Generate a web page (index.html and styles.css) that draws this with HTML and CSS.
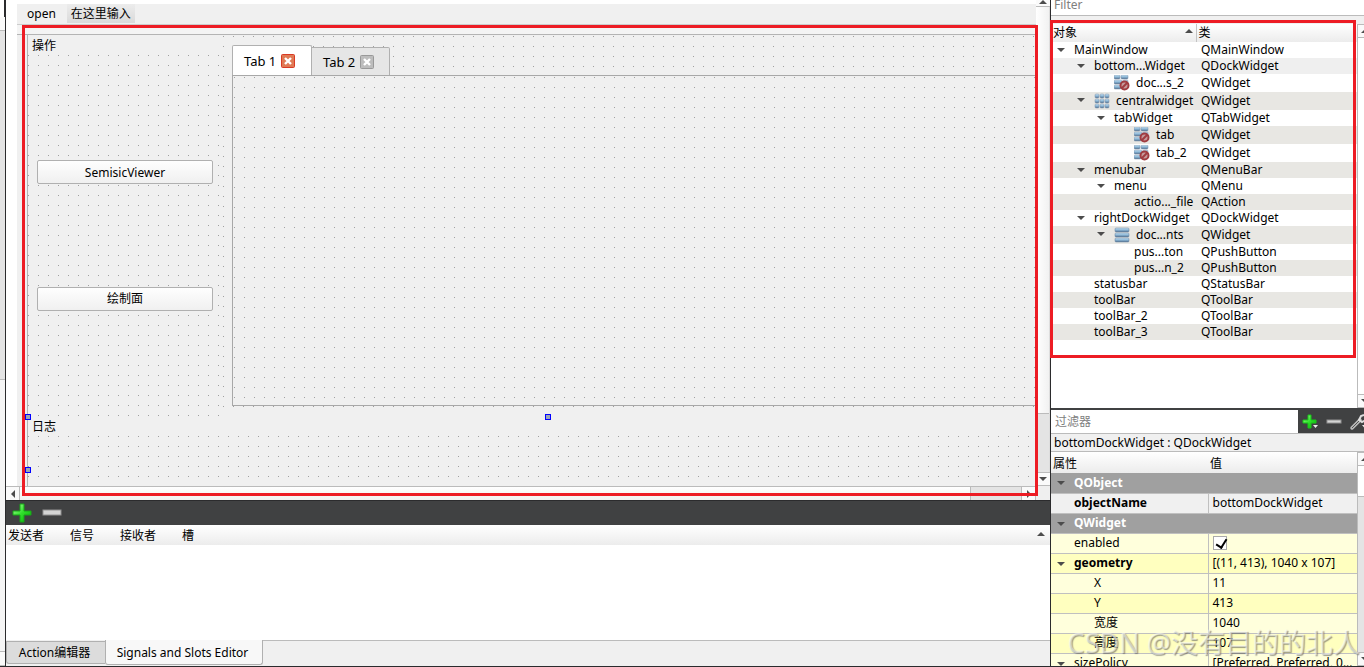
FILE: index.html
```html
<!DOCTYPE html>
<html lang="zh">
<head>
<meta charset="utf-8">
<title>Designer</title>
<link rel="stylesheet" href="styles.css">
</head>
<body>
<svg class="defs" aria-hidden="true">
  <defs>
    <linearGradient id="blue" x1="0" y1="0" x2="0" y2="1"><stop offset="0" stop-color="#c9e4f5"/><stop offset="0.5" stop-color="#8ab6d6"/><stop offset="1" stop-color="#54708f"/></linearGradient>
    <linearGradient id="green" x1="0" y1="0" x2="1" y2="1"><stop offset="0" stop-color="#b0ffa0"/><stop offset="0.5" stop-color="#2fe02a"/><stop offset="1" stop-color="#08a80a"/></linearGradient>
    <symbol id="nolayout" viewBox="0 0 16 16">
      <g fill="url(#blue)" stroke="#7f93a8" stroke-width=".5"><rect x="0" y="0" width="6" height="4" rx="1"/><rect x="7" y="0" width="7" height="4" rx="1"/><rect x="0" y="5" width="8" height="4" rx="1"/><rect x="9" y="5" width="5" height="4" rx="1"/><rect x="0" y="10" width="7" height="4" rx="1"/></g>
      <circle cx="10.500" cy="10.500" r="4" fill="#c59a9c" stroke="#a03c40" stroke-width="2"/><path d="M13.500 7.500l-6 6" stroke="#a03c40" stroke-width="2"/>
    </symbol>
    <symbol id="gridlayout" viewBox="0 0 16 16"><g fill="url(#blue)" stroke="#7f93a8" stroke-width=".5"><rect x="1" y="1" width="4" height="4" rx="1"/><rect x="6" y="1" width="4" height="4" rx="1"/><rect x="11" y="1" width="4" height="4" rx="1"/><rect x="1" y="6" width="4" height="4" rx="1"/><rect x="6" y="6" width="4" height="4" rx="1"/><rect x="11" y="6" width="4" height="4" rx="1"/><rect x="1" y="11" width="4" height="4" rx="1"/><rect x="6" y="11" width="4" height="4" rx="1"/><rect x="11" y="11" width="4" height="4" rx="1"/></g></symbol>
    <symbol id="vlayout" viewBox="0 0 16 16"><g fill="url(#blue)" stroke="#66809c" stroke-width=".5"><rect x="1" y="1" width="14" height="4" rx="1"/><rect x="1" y="6" width="14" height="4" rx="1"/><rect x="1" y="11" width="14" height="4" rx="1"/></g></symbol>
    <symbol id="plus" viewBox="0 0 20 20"><path d="M8 1h4v7h7v4h-7v7H8v-7H1V8h7z" fill="url(#green)" stroke="#16a816"/></symbol>
    <symbol id="minus" viewBox="0 0 20 20"><rect x="1" y="7" width="18" height="5" fill="#d4d4d4" stroke="#929292"/></symbol>
    <symbol id="cross" viewBox="0 0 14 14"><rect x="0.500" y="0.500" width="13" height="13" rx="1" fill="var(--fill)" stroke="var(--edge)"/><path d="M4 4l6 6M10 4l-6 6" stroke="#fff" stroke-width="2.400"/></symbol>
  </defs>
</svg>
<div class="app">
  <aside class="rail"><span class="rail-top"></span><span class="rail-btn"></span><span class="rail-groove"></span><span class="rail-rest"></span><span class="rail-btn"></span></aside>

  <main class="main">
    <section class="editor">
      <div class="form">
        <nav class="menubar"><button class="menu">open</button><button class="menu hint">在这里输入</button></nav>
        <div class="toolstrip"></div>
        <div class="canvas">
          <div class="docks">
            <section class="dock">
              <h2 class="dock-title">操作</h2>
              <div class="dock-body dots">
                <button class="push">SemisicViewer</button>
                <button class="push">绘制面</button>
              </div>
            </section>
            <section class="central dots">
              <div class="tabs">
                <div class="tab active"><span>Tab 1</span><button class="close hot" aria-label="Close Tab 1"><svg><use href="#cross"/></svg></button></div>
                <div class="tab"><span>Tab 2</span><button class="close" aria-label="Close Tab 2"><svg><use href="#cross"/></svg></button></div>
              </div>
              <div class="page dots"></div>
            </section>
          </div>
          <section class="log">
            <h2 class="dock-title">日志</h2>
            <div class="log-body dots"></div>
            <i class="grip top-left"></i><i class="grip top-mid"></i><i class="grip mid-left"></i>
          </section>
        </div>
        <div class="highlight form-mark"></div>
      </div>
      <div class="vscroll"><span class="sbtn upper"><i class="up"></i></span><span class="handle"></span><span class="groove"></span><span class="sbtn"><i class="down"></i></span></div>
      <div class="hscroll"><span class="sbtn"><i class="left"></i></span><span class="handle"></span><span class="groove"></span><span class="sbtn"><i class="right"></i></span></div>
    </section>

    <section class="signals">
      <div class="darkbar"><button class="tool" aria-label="Add"><svg><use href="#plus"/></svg></button><button class="tool" aria-label="Remove"><svg><use href="#minus"/></svg></button></div>
      <div class="signal-list">
        <table class="sigs"><colgroup><col class="s1"><col class="s2"><col class="s3"><col></colgroup><tr><th>发送者</th><th>信号</th><th>接收者</th><th>槽</th></tr></table>
        <i class="up"></i>
      </div>
      <div class="bottom-tabs"><button class="btab">Action编辑器</button><button class="btab current">Signals and Slots Editor</button><span class="tab-rest"></span></div>
    </section>
  </main>

  <aside class="side">
    <section class="objects">
      <input class="filter" type="text" placeholder="Filter" aria-label="Filter">
      <div class="tree-wrap">
        <table class="tree">
          <colgroup><col class="name"><col></colgroup>
          <thead><tr><th>对象<i class="up"></i></th><th>类</th></tr></thead>
          <tbody>
            <tr><td class="d0"><i class="down"></i>MainWindow</td><td>QMainWindow</td></tr>
            <tr class="soft"><td class="d1"><i class="down"></i>bottom...Widget</td><td>QDockWidget</td></tr>
            <tr class="tall"><td class="d2"><svg><use href="#nolayout"/></svg>doc...s_2</td><td>QWidget</td></tr>
            <tr class="tall alt"><td class="d1"><i class="down"></i><svg><use href="#gridlayout"/></svg>centralwidget</td><td>QWidget</td></tr>
            <tr><td class="d2"><i class="down"></i>tabWidget</td><td>QTabWidget</td></tr>
            <tr class="tall alt"><td class="d3"><svg><use href="#nolayout"/></svg>tab</td><td>QWidget</td></tr>
            <tr class="tall"><td class="d3"><svg><use href="#nolayout"/></svg>tab_2</td><td>QWidget</td></tr>
            <tr class="alt"><td class="d1"><i class="down"></i>menubar</td><td>QMenuBar</td></tr>
            <tr><td class="d2"><i class="down"></i>menu</td><td>QMenu</td></tr>
            <tr class="alt"><td class="d3">actio..._file</td><td>QAction</td></tr>
            <tr><td class="d1"><i class="down"></i>rightDockWidget</td><td>QDockWidget</td></tr>
            <tr class="tall alt"><td class="d2"><i class="down"></i><svg><use href="#vlayout"/></svg>doc...nts</td><td>QWidget</td></tr>
            <tr><td class="d3">pus...ton</td><td>QPushButton</td></tr>
            <tr class="alt"><td class="d3">pus...n_2</td><td>QPushButton</td></tr>
            <tr><td class="d1">statusbar</td><td>QStatusBar</td></tr>
            <tr class="alt"><td class="d1">toolBar</td><td>QToolBar</td></tr>
            <tr><td class="d1">toolBar_2</td><td>QToolBar</td></tr>
            <tr class="alt"><td class="d1">toolBar_3</td><td>QToolBar</td></tr>
          </tbody>
        </table>
        <div class="edge-scroll"><span class="sbtn"><i class="up"></i></span><span class="handle"></span><span class="sbtn"><i class="down"></i></span></div>
      </div>
      <div class="highlight tree-mark"></div>
    </section>

    <section class="props">
      <div class="prop-bar">
        <input class="prop-filter" type="text" placeholder="过滤器" aria-label="过滤器">
        <button class="ptool" aria-label="Add property"><svg viewBox="0 0 18 18"><path d="M7 2h3v5h5v3h-5v5H7v-5H2V7h5z" fill="url(#green)" stroke="#16c816"/><path d="M12 12h5l-2.500 3z" fill="#eee"/></svg></button>
        <button class="ptool" aria-label="Remove property"><svg viewBox="0 0 18 18"><rect x="2" y="7" width="14" height="3" fill="#d4d4d4" stroke="#929292"/></svg></button>
        <button class="ptool" aria-label="Configure"><svg viewBox="0 0 18 18"><path d="M3 15l8-8" stroke="#b9b9b9" stroke-width="3.500" stroke-linecap="round"/><path d="M3 15l8-8" stroke="#555" stroke-width="1"/><path d="M15 2l-3 1-2 4 3 2 4-2" fill="none" stroke="#ddd" stroke-width="2"/><path d="M13 12h5l-2.500 3z" fill="#eee"/></svg></button>
      </div>
      <div class="prop-object">bottomDockWidget : QDockWidget</div>
      <div class="prop-wrap">
        <table class="proptable">
          <colgroup><col class="key"><col></colgroup>
          <thead><tr><th>属性</th><th>值</th></tr></thead>
          <tbody>
            <tr class="group"><td colspan="2"><i class="down"></i>QObject</td></tr>
            <tr class="plain"><td><b>objectName</b></td><td>bottomDockWidget</td></tr>
            <tr class="group"><td colspan="2"><i class="down"></i>QWidget</td></tr>
            <tr class="pale"><td><label for="enabled">enabled</label></td><td><input id="enabled" class="check" type="checkbox" checked></td></tr>
            <tr class="yellow"><td><i class="down"></i><b>geometry</b></td><td>[(11, 413), 1040 x 107]</td></tr>
            <tr class="pale sub"><td>X</td><td>11</td></tr>
            <tr class="yellow sub"><td>Y</td><td>413</td></tr>
            <tr class="pale sub"><td>宽度</td><td>1040</td></tr>
            <tr class="yellow sub"><td>高度</td><td>107</td></tr>
            <tr class="pale"><td><i class="down"></i>sizePolicy</td><td>[Preferred, Preferred, 0...</td></tr>
          </tbody>
        </table>
        <div class="edge-scroll"><span class="sbtn"><i class="up"></i></span><span class="handle short"></span><span class="groove"></span><span class="sbtn"><i class="down"></i></span></div>
      </div>
    </section>
  </aside>
  <div class="watermark">CSDN @没有目的的北人</div>
</div>
</body>
</html>
```
FILE: styles.css
```css
* { box-sizing: border-box; }
body { margin: 0; overflow: hidden; font: 12px/16px "Noto Sans", "Noto Sans CJK SC", sans-serif; color: #000; }
button, input { font: inherit; color: inherit; margin: 0; padding: 0; border: 0; background: none; border-radius: 0; }
table { border-collapse: collapse; border-spacing: 0; table-layout: fixed; width: 100%; }
th { font-weight: 400; text-align: left; }
th, td { padding: 0; white-space: nowrap; overflow: hidden; }
svg { display: block; overflow: visible; }
.defs { position: absolute; width: 0; height: 0; }
.app { position: relative; display: flex; height: 100vh; overflow: hidden; background: #fff; border-bottom: 1px solid #2b2b2d; }

.up, .down, .left, .right { display: block; width: 0; height: 0; border: 4px solid transparent; flex: none; }
.up { border-top: 0; border-bottom-color: #4c4c4c; }
.down { border-bottom: 0; border-top-color: #4c4c4c; }
.left { border-left: 0; border-right-color: #4c4c4c; }
.right { border-right: 0; border-left-color: #4c4c4c; }

.rail { width: 6px; flex: none; display: flex; flex-direction: column; border-right: 1px solid #2b2b2d; background: #f5f5f5; }
.rail-top { height: 17px; background: #fff; border-right: 1px solid #2b2b2d; }
.rail-btn { height: 14px; border-bottom: 1px solid #bbb; background: #fafafa; }
.rail-groove { flex: 9; background: #e4e4e4; border-bottom: 1px solid #bbb; }
.rail-rest { flex: 7; border-bottom: 1px solid #bbb; }

.main { flex: 1; min-width: 0; display: flex; flex-direction: column; }
.editor { flex: 1; min-height: 0; display: grid; grid-template-columns: 1fr 14px; grid-template-rows: 1fr 14px; }
.form { position: relative; display: flex; flex-direction: column; min-width: 0; padding: 4px 0 0 11px; }
.menubar { display: flex; height: 20px; background: #f0f0f0; padding-left: 5px; gap: 6px; }
.menu { padding: 1px 5px 0; height: 19px; line-height: 18px; }
.hint { padding: 1px 4px 0; background: linear-gradient(#ececec, #dadada); }
.toolstrip { height: 11px; border-top: 1px solid #ccc; border-bottom: 1px solid #b4b4b4; background: #f4f4f4; }
.canvas { flex: 1; display: flex; flex-direction: column; background: #f0f0f0; padding-left: 10px; }
.dots {
  background-image: linear-gradient(90deg, transparent 1px, #f0f0f0 1px), linear-gradient(#a0a0a0 1px, #f0f0f0 1px);
  background-size: 10px 10px;
}
.docks { flex: 1; display: flex; border-left: 1px solid #b4b4b4; }
.dock { width: 194px; display: flex; flex-direction: column; }
.dock-title { margin: 0; padding: 1px 0 0 4px; height: 20px; font-size: 12px; line-height: 20px; font-weight: 400; }
.dock-body { flex: 1; padding: 54px 9px; display: flex; flex-direction: column; justify-content: space-around; }
.push { height: 24px; padding-top: 1px; border: 1px solid #b0b0b0; border-radius: 2px; background: linear-gradient(#fefefe, #f0f0f0); }
.central { flex: 1; min-width: 0; display: flex; flex-direction: column; padding: 10px 0 10px 10px; background-position: 1px 1px; }
.tabs { display: flex; align-items: flex-end; height: 31px; margin-bottom: -1px; }
.tab { display: flex; align-items: center; gap: 5px; width: 78px; height: 29px; padding-left: 11px; border: 1px solid #b0b0b0; border-left: 0; border-radius: 0 2px 0 0; background: #e6e6e6; font-size: 13px; }
.tab.active { height: 31px; width: 80px; border: 1px solid #b0b0b0; border-bottom: 0; border-radius: 2px 2px 0 0; background: #fff; }
.close { --fill: #bdbdbd; --edge: #999; width: 14px; height: 14px; }
.close.hot { --fill: #e07a55; --edge: #d93a24; }
.close svg { width: 14px; height: 14px; }
.page { flex: 1; border: 1px solid #a8a8a8; border-right: 0; background-position: 1px 1px; }
.log { position: relative; height: 70px; display: flex; flex-direction: column; border-left: 1px solid #b4b4b4; }
.log-body { flex: 1; }
.grip { position: absolute; width: 6px; height: 6px; border: 1px solid #00f; background: #9ba5b5; }
.top-left { left: -3px; top: -2px; }
.top-mid { left: 517px; top: -2px; }
.mid-left { left: -3px; top: 51px; }
.highlight { position: absolute; border: 3px solid #ed1c24; pointer-events: none; z-index: 2; }
.form-mark { left: 16px; top: 25px; right: -2px; bottom: -10px; }

.sbtn { flex: none; width: 14px; height: 14px; display: flex; align-items: center; justify-content: center; background: #fafafa; border: 1px solid #bbb; }
.vscroll { display: flex; flex-direction: column; background: #fff; border-right: 1px solid #ddd; }
.vscroll .sbtn { border-width: 1px 0; }
.vscroll .upper { height: 7px; border-top: 0; align-items: flex-start; }
.vscroll .handle { flex: 7; background: linear-gradient(90deg, #fff, #f1f1f1); }
.vscroll .groove { flex: 1; background: #e4e4e4; border-top: 1px solid #bbb; }
.hscroll { display: flex; grid-column: 1 / 3; padding-right: 14px; background: #efefef; }
.hscroll .sbtn { border-left: 0; border-bottom: 0; }
.hscroll .handle { flex: 19; border: 1px solid #bbb; border-width: 1px 1px 0 0; background: linear-gradient(#fff, #f1f1f1); }
.hscroll .groove { flex: 1; background: #e4e4e4; border: 1px solid #bbb; border-width: 1px 1px 0 0; }

.signals { height: 166px; flex: none; display: flex; flex-direction: column; }
.darkbar { height: 25px; border-top: 1px solid #2b2b2d; background: #404142; display: flex; align-items: center; gap: 10px; padding-left: 6px; }
.tool, .tool svg { width: 20px; height: 20px; }
.signal-list { flex: 1; position: relative; }
.signal-list .up { position: absolute; right: 5px; top: 7px; }
.sigs tr { height: 20px; background: linear-gradient(#fff, #ececec); }
.sigs th { padding: 2px 0 0 2px; }
.s1 { width: 62px; } .s2 { width: 50px; } .s3 { width: 62px; }
.bottom-tabs { height: 26px; display: flex; background: #f0f0f0; }
.btab { width: 99px; height: 23px; margin-top: 1px; padding-right: 3px; background: #dcdcdc; border: 1px solid #b0b0b0; border-right: 0; border-radius: 0 0 0 3px; }
.btab.current { width: 158px; height: 25px; margin-top: 0; padding-top: 1px; background: #f8f8f8; border-right: 1px solid #b0b0b0; border-top: 0; border-radius: 0 0 3px 3px; }
.tab-rest { flex: 1; border-top: 1px solid #bbb; }

.side { width: 314px; flex: none; display: flex; flex-direction: column; border-left: 1px solid #2b2b2d; }
.objects { position: relative; height: 408px; flex: none; display: flex; flex-direction: column; background: #f0f0f0; }
.filter { height: 16px; margin-bottom: 8px; padding: 0 0 5px 3px; background: #fff; border: 1px solid #bbb; border-width: 0 0 1px; }
input::placeholder { color: #808080; opacity: 1; }
.tree-wrap { flex: 1; display: flex; background: #fff; }
.tree { flex: 1; width: auto; align-self: flex-start; }
.tree .name { width: 145px; }
.tree thead tr { height: 18px; background: linear-gradient(#fff, #ececec); }
.tree th { position: relative; padding-left: 2px; }
.tree th:first-child { border-right: 1px solid #c4c4c4; }
.tree th .up { position: absolute; right: 3px; top: 5px; }
.tree tbody tr { height: 16px; }
.tree tbody .tall { height: 18px; }
.alt { background: #e8e7e3; }
.soft { background: #efefef; }
.tree td:last-child { padding-left: 5px; }
.tree td, .proptable td { position: relative; }
.tree svg { position: absolute; top: 1px; width: 16px; height: 16px; }
.tree td .down { position: absolute; top: 6px; }
.tree .d0 { padding-left: 23px; } .d0 .down { left: 6px; }
.tree .d1 { padding-left: 43px; } .d1 .down { left: 26px; }
.tree .d2 { padding-left: 63px; } .d2 .down { left: 46px; }
.tree .d3 { padding-left: 83px; }
.tree td:has(svg) { text-indent: 22px; }
.edge-scroll { width: 7px; flex: none; display: flex; flex-direction: column; overflow: hidden; background: #fff; border-left: 1px solid #bbb; }
.edge-scroll .sbtn { border-width: 1px 0; }
.edge-scroll .handle { flex: 1; }
.edge-scroll .short { flex: none; height: 30px; }
.edge-scroll .groove { flex: 1; background: #e4e4e4; border-top: 1px solid #bbb; }
.tree-mark { left: -1px; top: 20px; right: 8px; bottom: 50px; }

.props { flex: 1; min-height: 0; display: flex; flex-direction: column; overflow: hidden; }
.prop-bar { height: 25px; flex: none; display: flex; align-items: center; padding-top: 2px; background: #404142; overflow: hidden; }
.prop-filter { width: 247px; height: 23px; flex: none; padding-left: 4px; background: #fff; }
.ptool { width: 18px; height: 18px; flex: none; margin: 0 3px; }
.prop-object { height: 19px; flex: none; padding-left: 3px; line-height: 18px; background: #f0f0f0; border: 1px solid #bbb; border-width: 1px 0; }
.prop-wrap { flex: 1; min-height: 0; display: flex; }
.proptable { flex: 1; width: auto; align-self: flex-start; }
.proptable .key { width: 157px; }
.proptable tr { height: 20px; }
.proptable thead tr { height: 21px; background: linear-gradient(#fff, #ececec); }
.proptable th { padding: 2px 0 0 2px; }
.proptable td { padding-left: 23px; border-bottom: 1px solid #c0c0c0; }
.proptable td + td { padding-left: 4px; border-left: 1px solid #c0c0c0; }
.proptable .sub td:first-child { padding-left: 43px; }
.proptable td .down { position: absolute; left: 6px; top: 8px; }
.group { background: #a0a0a0; color: #fff; font-weight: 700; }
.plain { background: #f0f0f0; }
.pale { background: #ffffdc; }
.yellow { background: #ffffbf; }
.check { appearance: none; display: block; width: 14px; height: 14px; border: 1px solid #aaa; background: #fff; }
.check:checked::after { content: ""; display: block; width: 5px; height: 9px; margin: 0 0 0 4px; border: solid #000; border-width: 0 2px 2px 0; transform: rotate(32deg); }
.watermark { position: absolute; right: 4px; bottom: 5px; font-size: 27px; line-height: 36px; color: rgba(255,255,255,.5); text-shadow: 1px 1px 1px rgba(90,90,90,.6); white-space: nowrap; z-index: 3; }
```
